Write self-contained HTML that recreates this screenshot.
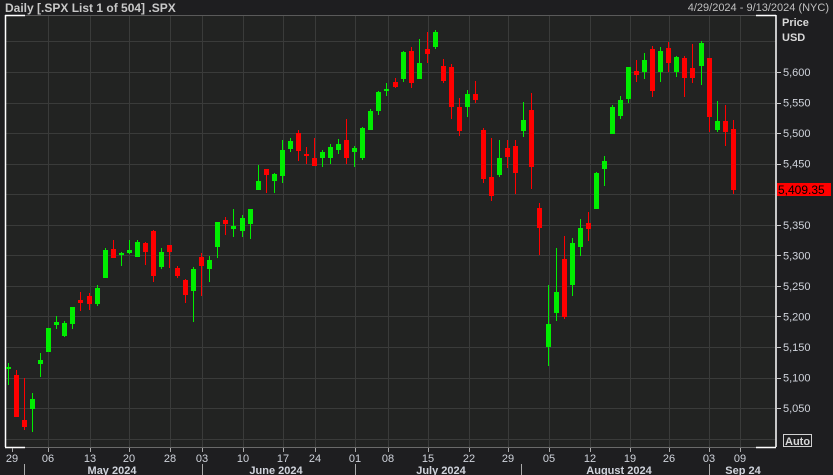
<!DOCTYPE html>
<html><head><meta charset="utf-8"><style>
body{margin:0;width:833px;height:475px;background:#1e1e20;overflow:hidden;font-family:"Liberation Sans",sans-serif}
svg{position:absolute;left:0;top:0}
</style></head><body>
<svg id="s" width="833" height="475" xmlns="http://www.w3.org/2000/svg" font-family="Liberation Sans, sans-serif">
<rect x="0" y="0" width="833" height="475" fill="#1e1e20"/>
<rect x="5" y="15" width="771" height="432" fill="#222322"/>
<g id="grid" stroke="#3a3b3a" stroke-width="1"></g>
<line x1="5" y1="15.5" x2="776" y2="15.5" stroke="#5a5a5a"/>
<line x1="5" y1="447.5" x2="776" y2="447.5" stroke="#6a6a6a"/>
<g stroke="#ffffff" stroke-width="1.5">
<line x1="5.5" y1="15" x2="5.5" y2="447"/>
<line x1="776" y1="15" x2="776" y2="447"/>
<line x1="5" y1="15.5" x2="25" y2="15.5"/>
<line x1="756" y1="15.5" x2="776" y2="15.5"/>
<line x1="5" y1="447.5" x2="25" y2="447.5"/>
<line x1="756" y1="447.5" x2="776" y2="447.5"/>
</g>
<g id="c"></g>
<g id="ax" fill="#d0d4dc" font-size="11"></g>
<text x="5" y="12" fill="#c8c8c8" font-size="12" font-weight="bold">Daily [.SPX List 1 of 504] .SPX</text>
<text x="829" y="11" fill="#c0c0c0" font-size="11" text-anchor="end">4/29/2024 - 9/13/2024 (NYC)</text>
<text x="782" y="26" fill="#d8d8d8" font-size="11" font-weight="bold">Price</text>
<text x="782" y="41" fill="#d8d8d8" font-size="11" font-weight="bold">USD</text>
<rect x="777" y="183" width="54" height="13" fill="#ff0000"/>
<text x="778" y="194" fill="#000" font-size="12">5,409.35</text>
<rect x="783.5" y="434.5" width="28" height="12" fill="none" stroke="#d0d0d0"/>
<text x="785" y="445" fill="#d8d8d8" font-size="11" font-weight="bold">Auto</text>
</svg>
<script>
var d=[[8,363,385,367,369,'g'],[16,370,417,375,417,'r'],[24,378,430,420,427,'r'],[32,393,432,399,409,'g'],[40,353,377,360,364,'g'],[48,328,352,328,352,'g'],[56,316,329,322,325,'g'],[64,321,337,323,336,'g'],[72,307,329,307,324,'g'],[80,292,311,300,303,'r'],[89,293,310,296,304,'r'],[97,285,306,288,304,'g'],[105,248,278,250,278,'g'],[113,240,258,249,258,'r'],[121,252,266,253,254,'g'],[129,240,254,250,253,'g'],[137,240,257,242,257,'g'],[145,242,265,243,252,'r'],[153,230,282,231,276,'r'],[161,248,269,252,267,'g'],[169,245,268,245,252,'r'],[177,266,278,268,276,'r'],[185,279,303,280,295,'r'],[193,267,322,269,291,'g'],[201,253,296,257,266,'r'],[209,256,282,260,269,'g'],[217,222,258,222,247,'g'],[225,217,235,220,224,'r'],[233,209,237,226,229,'g'],[242,215,237,218,231,'g'],[250,209,239,209,224,'g'],[258,165,190,181,190,'g'],[266,169,193,169,175,'r'],[274,173,193,174,181,'g'],[282,140,183,150,176,'g'],[290,138,152,141,149,'g'],[298,130,161,133,151,'r'],[306,147,164,154,156,'r'],[314,138,166,158,166,'r'],[322,150,167,152,158,'g'],[330,144,164,147,158,'g'],[338,139,154,144,150,'g'],[346,119,164,140,158,'r'],[354,146,167,148,152,'g'],[362,127,160,128,158,'g'],[370,109,130,111,130,'g'],[378,91,115,92,111,'g'],[386,83,96,89,90,'g'],[395,78,88,82,87,'r'],[403,51,82,52,79,'g'],[411,47,88,51,83,'r'],[419,39,79,63,79,'g'],[427,32,63,49,54,'r'],[435,30,49,32,47,'g'],[443,59,83,66,81,'r'],[451,64,119,67,107,'r'],[459,98,136,107,131,'r'],[467,90,117,94,107,'g'],[475,81,103,94,100,'r'],[483,128,183,130,179,'r'],[491,138,201,177,196,'r'],[499,140,177,158,175,'g'],[507,140,168,148,157,'r'],[515,140,194,146,173,'r'],[523,102,137,120,131,'g'],[531,93,189,110,167,'r'],[539,203,255,208,228,'r'],[548,285,366,324,347,'g'],[556,248,321,292,313,'g'],[564,236,319,259,317,'r'],[572,238,296,243,285,'g'],[580,219,256,228,247,'g'],[588,212,241,223,229,'r'],[596,172,209,173,209,'g'],[604,156,186,161,169,'g'],[612,105,134,107,134,'g'],[620,96,119,100,116,'g'],[628,67,103,67,99,'g'],[636,60,82,71,75,'r'],[644,53,79,60,72,'g'],[652,46,97,49,91,'r'],[660,47,82,51,72,'g'],[668,42,72,48,63,'r'],[676,56,77,57,72,'g'],[684,56,97,58,78,'r'],[692,44,83,68,78,'r'],[701,41,85,43,66,'g'],[709,58,132,58,117,'r'],[717,101,132,121,130,'g'],[725,105,146,121,132,'r'],[733,120,194,129,190,'r']];
var h='';
d.forEach(function(c){var col=c[5]=='g'?'#00ee00':'#ff0000';
h+='<rect x="'+(c[0])+'" y="'+c[1]+'" width="1" height="'+(c[2]-c[1])+'" fill="'+col+'"/>';
h+='<rect x="'+(c[0]-2)+'" y="'+c[3]+'" width="5" height="'+Math.max(2,c[4]-c[3])+'" fill="'+col+'"/>';});
document.getElementById('c').innerHTML=h;
var g='',a='';
var vx=[12,48,90,129,170,202,243,283,315,355,388,428,469,508,549,590,630,669,709,740];
var vl=['29','06','13','20','28','03','10','17','24','01','08','15','22','29','05','12','19','26','03','09'];
vx.forEach(function(x,i){if(i>0)g+='<line x1="'+(x+.5)+'" y1="16" x2="'+(x+.5)+'" y2="447"/>';
a+='<line x1="'+(x+.5)+'" y1="448" x2="'+(x+.5)+'" y2="452" stroke="#aaa"/>';
a+='<text x="'+x+'" y="462" text-anchor="middle">'+vl[i]+'</text>';});
for(var p=5000;p<=5650;p+=50){var y=72+(5600-p)*0.611;if(y<18||y>446)continue;
g+='<line x1="6" y1="'+(Math.round(y)+.5)+'" x2="776" y2="'+(Math.round(y)+.5)+'"/>';
if(p<5050||p>5600)continue;
a+='<line x1="777" y1="'+(Math.round(y)+.5)+'" x2="781" y2="'+(Math.round(y)+.5)+'" stroke="#ccc"/>';
if(p!=5400)a+='<text x="783" y="'+(y+4)+'">'+(p+'').replace(/(\d)(\d{3})$/,'$1,$2')+'</text>';}
[24,202,355,521,709].forEach(function(x){a+='<line x1="'+(x+.5)+'" y1="464" x2="'+(x+.5)+'" y2="475" stroke="#aaa"/>';});
[['May 2024',112],['June 2024',276],['July 2024',441],['August 2024',619],['Sep 24',743]].forEach(function(m){a+='<text x="'+m[1]+'" y="474" text-anchor="middle" font-weight="bold">'+m[0]+'</text>';});
document.getElementById('grid').innerHTML=g;
document.getElementById('ax').innerHTML=a;
</script>
</body></html>
